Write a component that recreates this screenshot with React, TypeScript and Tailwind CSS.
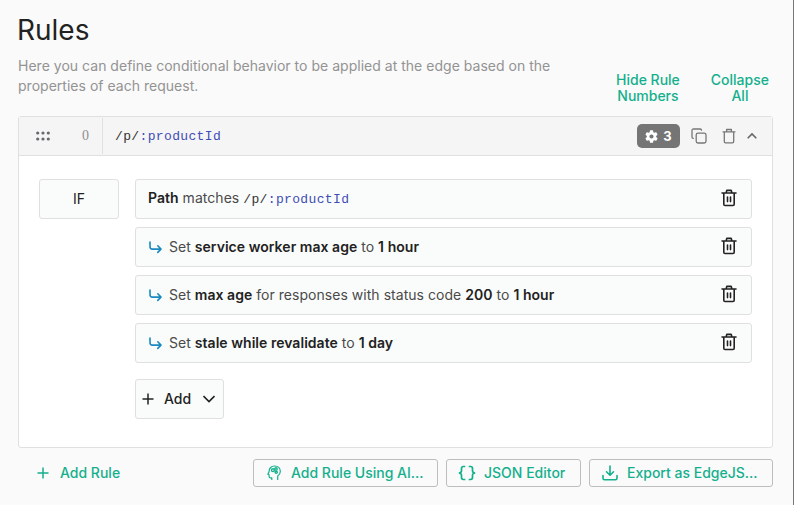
import React from "react";

type IconProps = { className?: string };

const Trash = ({ className = "" }: IconProps) => (
  <svg className={className} width="16" height="18" viewBox="0 0 16 18" fill="none" stroke="currentColor" strokeWidth="1.6" strokeLinecap="round" strokeLinejoin="round">
    <path d="M1 4h14M5 4l.8-2.6h4.4L11 4M2.8 4v11.2c0 .8.5 1.3 1.3 1.3h7.8c.8 0 1.3-.5 1.3-1.3V4M6.5 8v4.6M9.5 8v4.6" />
  </svg>
);

const SmallTrash = () => (
  <svg width="14" height="16" viewBox="0 0 14 16" fill="none" stroke="currentColor" strokeWidth="1.3" strokeLinejoin="round" strokeLinecap="round">
    <path d="M1 3.8h12M4.6 3.6V1.5h4.8v2.1M2.3 4v9.5c0 .8.5 1.3 1.3 1.3h6.8c.8 0 1.3-.5 1.3-1.3V4" />
  </svg>
);

const Copy = () => (
  <svg width="16" height="16" viewBox="0 0 16 16" fill="none" stroke="currentColor" strokeWidth="1.3" strokeLinecap="round">
    <rect x="5.2" y="5.2" width="9.8" height="9.8" rx="1.8" />
    <path d="M2.3 10.4C1.4 10.4 1 9.9 1 9.1V2.4C1 1.5 1.5 1 2.4 1h6.8c.8 0 1.3.4 1.3 1.2" />
  </svg>
);

const Gear = () => (
  <svg width="13" height="13" viewBox="2 2 20 20" fill="currentColor">
    <path d="M19.14 12.94c.04-.3.06-.61.06-.94s-.02-.64-.07-.94l2.03-1.58a.49.49 0 0 0 .12-.61l-1.92-3.32a.49.49 0 0 0-.59-.22l-2.39.96a7 7 0 0 0-1.62-.94l-.36-2.54a.48.48 0 0 0-.48-.41h-3.84a.48.48 0 0 0-.47.41l-.36 2.54a7 7 0 0 0-1.62.94l-2.39-.96a.48.48 0 0 0-.59.22L2.74 8.87a.48.48 0 0 0 .12.61l2.03 1.58a7 7 0 0 0 0 1.88l-2.03 1.58a.49.49 0 0 0-.12.61l1.92 3.32c.12.22.37.29.59.22l2.39-.96c.5.38 1.03.7 1.62.94l.36 2.54c.05.24.24.41.48.41h3.84c.24 0 .44-.17.47-.41l.36-2.54a7 7 0 0 0 1.62-.94l2.39.96c.22.08.47 0 .59-.22l1.92-3.32a.48.48 0 0 0-.12-.61zM12 15.2a3.2 3.2 0 1 1 0-6.4 3.2 3.2 0 0 1 0 6.4" />
  </svg>
);

const Plus = ({ className = "" }: IconProps) => (
  <svg className={className} width="12" height="12" viewBox="0 0 12 12" stroke="currentColor" strokeWidth="1.5">
    <path d="M6 .5v11M.5 6h11" />
  </svg>
);

const SubArrow = () => (
  <svg className="mr-[7px] shrink-0 text-[#1a8abf]" width="14" height="13" viewBox="0 0 14 13" fill="none" stroke="currentColor" strokeWidth="1.6" strokeLinecap="round" strokeLinejoin="round">
    <path d="M2 1v4.8C2 7.3 2.8 8.1 4.4 8.1H12.9M9.8 4.8l3.2 3.3-3.2 3.3" />
  </svg>
);

const HeadGears = () => (
  <svg width="14" height="16" viewBox="0 0 14 16" fill="none" stroke="currentColor" strokeWidth="1.2" strokeLinejoin="round">
    <path d="M4.8 15v-2.2H3.3c-.8 0-1.2-.4-1.2-1.2V9.8L.8 9.2 2 6.9C2 3.3 4.3 1 7.7 1c3.3 0 5.6 2.3 5.6 5.4 0 2.2-1 3.5-2.6 4.7V15" />
    <circle cx="5.9" cy="5.2" r="1.4" strokeWidth="1.4" />
    <circle cx="9" cy="3.9" r="1.2" strokeWidth="1.4" />
    <circle cx="9.2" cy="7.3" r="1.1" strokeWidth="1.4" />
  </svg>
);

const Braces = () => (
  <svg width="18" height="16" viewBox="0 0 18 16" fill="none" stroke="currentColor" strokeWidth="1.7">
    <path d="M7.3 1.5H5.4c-1.3 0-1.9.6-1.9 1.9v2.2C3.5 7.2 2.6 8 .8 8c1.8 0 2.7.8 2.7 2.4v2.2c0 1.3.6 1.9 1.9 1.9h1.9M10.7 1.5h1.9c1.3 0 1.9.6 1.9 1.9v2.2c0 1.6.9 2.4 2.7 2.4-1.8 0-2.7.8-2.7 2.4v2.2c0 1.3-.6 1.9-1.9 1.9h-1.9" />
  </svg>
);

const Download = () => (
  <svg width="16" height="16" viewBox="0 0 16 16" fill="none" stroke="currentColor" strokeWidth="1.6" strokeLinecap="round" strokeLinejoin="round">
    <path d="M8 1v9M4.5 6.8L8 10.2l3.5-3.4M1 10.5v2.8c0 1 .5 1.5 1.5 1.5h11c1 0 1.5-.5 1.5-1.5v-2.8" />
  </svg>
);

const RoutePath = ({ className = "" }: IconProps) => (
  <span className={`font-['Liberation_Mono',monospace] text-[13px] tracking-[0.36px] text-[#333] ${className}`}>
    /p/<span className="text-[#3f4db5]">:productId</span>
  </span>
);

const Row = ({ arrow, children }: { arrow?: boolean; children: React.ReactNode }) => (
  <div className="flex h-10 items-center rounded-[3px] border border-[#e0e0e0] bg-[#fafcfb] pr-[14px] pl-3 tracking-[0.035px] text-[#4a4a4a]">
    {arrow && <SubArrow />}
    <p className="flex-1 whitespace-nowrap">{children}</p>
    <Trash className="mb-[2px] text-[#222]" />
  </div>
);

const B = ({ children }: { children: React.ReactNode }) => (
  <span className="font-semibold text-[#222]">{children}</span>
);

const outlined = "flex h-7 items-center rounded-[3px] border border-[#bdbdbd] font-medium whitespace-nowrap";

export default function App() {
  return (
    <div className="h-[505px] w-[794px] overflow-hidden border-r border-[#777] bg-[#fafafa] pt-3 pr-5 pl-[18px] font-['Inter',sans-serif] text-[14px] leading-5 text-[#222]">
      <h1 className="-ml-px text-[28px] leading-9 font-normal">Rules</h1>
      <div className="mt-2 flex h-[60px] justify-between">
        <p className="w-[550px] tracking-[0.02px] whitespace-nowrap text-[#939393]">
          Here you can define conditional behavior to be applied at the edge based on the<br />properties of each request.
        </p>
        <div className="flex pt-4 text-center leading-4 font-medium text-[#14b08d]">
          <button className="mr-[31px] h-8">Hide Rule<br />Numbers</button>
          <button className="mr-1 h-8">Collapse<br />All</button>
        </div>
      </div>

      <section className="h-[332px] rounded-[3px] border border-[#e0e0e0] bg-white">
        <header className="flex h-[39px] items-center border-b border-[#e0e0e0] bg-[#f5f5f5]">
          <div className="flex h-9 w-[84px] items-center border-r border-[#e0e0e0]">
            <svg className="ml-[17px] text-[#66696e]" width="14" height="10" viewBox="0 0 14 10" fill="currentColor">
              {[1.7, 7, 12.3].map((x) => (
                <React.Fragment key={x}>
                  <circle cx={x} cy="2" r="1.6" />
                  <circle cx={x} cy="8" r="1.6" />
                </React.Fragment>
              ))}
            </svg>
            <span className="ml-8 font-['Liberation_Serif',serif] text-[14px] text-[#909090]">0</span>
          </div>
          <RoutePath className="ml-3 flex-1 pt-px" />
          <span className="flex h-6 w-[43px] items-center justify-center gap-[5px] rounded-[5px] bg-[#757575] text-[13px] font-bold text-white">
            <Gear />3
          </span>
          <div className="flex items-center text-[#777]">
            <span className="ml-[11px]"><Copy /></span>
            <span className="ml-[15px]"><SmallTrash /></span>
            <svg className="mr-[15px] ml-[11px] text-[#666]" width="10" height="8" viewBox="0 0 10 8" fill="none" stroke="currentColor" strokeWidth="1.6"><path d="M.7 6.3L5 2l4.3 4.3" /></svg>
          </div>
        </header>
        <div className="flex pt-[23px] pr-5 pl-5">
          <div className="mr-4 flex h-10 w-20 items-center justify-center rounded-[3px] border border-[#e0e0e0] bg-[#fafcfb]">IF</div>
          <div className="flex flex-1 flex-col gap-2">
            <Row><B>Path</B> matches <RoutePath /></Row>
            <Row arrow>Set <B>service worker max age</B> to <B>1 hour</B></Row>
            <Row arrow>Set <B>max age</B> for responses with status code <B>200</B> to <B>1 hour</B></Row>
            <Row arrow>Set <B>stale while revalidate</B> to <B>1 day</B></Row>
            <button className="mt-2 flex h-10 w-[89px] items-center rounded-[3px] border border-[#e0e0e0] bg-[#fafcfb] pl-[6px] font-medium">
              <Plus /><span className="ml-[10px]">Add</span>
              <svg className="ml-3" width="12" height="8" viewBox="0 0 12 8" fill="none" stroke="currentColor" strokeWidth="1.6"><path d="M.5 1l5.5 5.5L11.5 1" /></svg>
            </button>
          </div>
        </div>
      </section>

      <footer className="mt-[11px] flex items-center text-[#14b08d]">
        <button className="ml-[19px] flex items-center font-medium"><Plus /><span className="ml-[11px]">Add Rule</span></button>
        <div className="ml-auto flex gap-2">
          <button className={`${outlined} w-[185px] pl-[13px]`}><HeadGears /><span className="ml-[10px]">Add Rule Using AI...</span></button>
          <button className={`${outlined} w-[135px] pl-[11px]`}><Braces /><span className="ml-2">JSON Editor</span></button>
          <button className={`${outlined} w-[184px] pl-3`}><Download /><span className="ml-[9px]">Export as EdgeJS...</span></button>
        </div>
      </footer>
    </div>
  );
}
